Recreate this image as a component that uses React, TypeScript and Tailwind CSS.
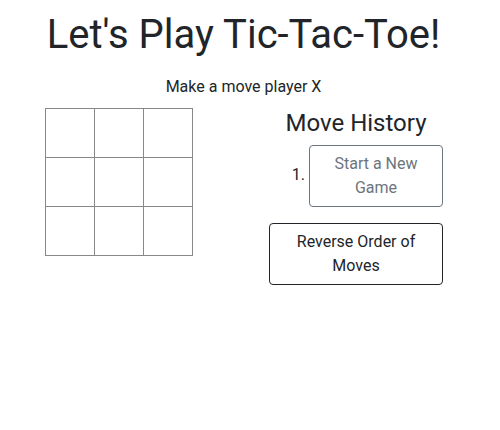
export default function App() {
  const cells = Array.from({ length: 9 });
  return (
    <div className="w-[500px] h-[430px] bg-white text-[#212529] font-['Roboto',sans-serif]">
      <div className="w-[487px]">
        <h1 className="pt-[11px] text-center text-[40px] leading-[48px] font-normal">
          Let's Play Tic-Tac-Toe!
        </h1>
        <p className="mt-[16px] text-center text-[16px] leading-[24px]">Make a move player X</p>
        <div className="flex mt-[9px]">
          <div className="ml-[45px] grid grid-cols-[repeat(3,49px)] w-[148px] h-[148px] border-t border-l border-[#888]">
            {cells.map((_, i) => (
              <button key={i} className="w-[49px] h-[49px] border-r border-b border-[#888] bg-white" />
            ))}
          </div>
          <div className="ml-[76px] w-[174px] flex flex-col">
            <h3 className="text-center text-[24px] leading-[29px] font-normal mt-[1px]">Move History</h3>
            <ol className="list-decimal pl-[40px] mt-[7px]">
              <li>
                <button className="align-middle w-[134px] py-[6px] px-[12px] rounded-[4px] border border-[#6c757d] text-[#6c757d] text-[16px] leading-[24px]">
                  Start a New Game
                </button>
              </li>
            </ol>
            <button className="mt-[16px] w-[174px] py-[6px] px-[12px] rounded-[4px] border border-[#212529] text-[#212529] text-[16px] leading-[24px]">
              Reverse Order of Moves
            </button>
          </div>
        </div>
      </div>
    </div>
  );
}
